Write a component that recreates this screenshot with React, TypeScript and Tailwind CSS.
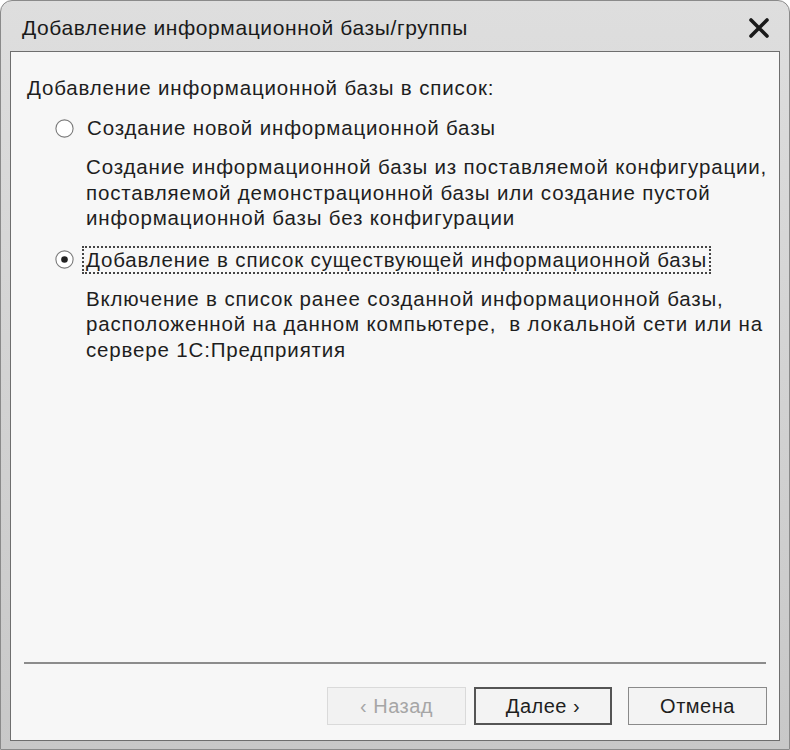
import React from "react";

const font = { fontFamily: '"Liberation Sans", Arial, sans-serif' };

function Radio({ checked }: { checked?: boolean }) {
  return (
    <svg width="19" height="19" viewBox="0 0 19 19" className="shrink-0">
      <circle cx="9.5" cy="9.5" r="8.6" fill="#fff" stroke="#7a7a7a" strokeWidth="1.1" />
      {checked && <circle cx="9.5" cy="9.5" r="3.3" fill="#222" />}
    </svg>
  );
}

export default function App() {
  return (
    <div className="w-[790px] h-[750px] bg-white text-[#1e1e1e]" style={font}>
      <div className="w-[790px] h-[750px] rounded-t-[12px] border border-[#8a8a8a] bg-gradient-to-b from-[#dedede] to-[#c8c8c8] flex flex-col px-[9px] pb-[8px]">
        <div className="h-[50px] flex items-center justify-between pl-[12px] pr-[10px] shrink-0">
          <span className="text-[21px] tracking-[0.6px] text-[#1a1a1a] pt-[4px]">Добавление информационной базы/группы</span>
          <svg width="22" height="20" viewBox="0 0 22 20" className="mt-[4px]">
            <path d="M3 2 L19 18 M19 2 L3 18" stroke="#1a1a1a" strokeWidth="3.6" strokeLinecap="round" />
          </svg>
        </div>
        <div className="flex-1 bg-[#f7f7f7] border border-[#6e6e6e] flex flex-col">
          <div className="flex-1 pl-[16px] pr-[6px] pt-[23px] text-[20.5px] tracking-[0.84px]">
            <div className="leading-[26px]">Добавление информационной базы в список:</div>
            <div className="flex items-center gap-[13px] mt-[14px] pl-[28px]">
              <Radio />
              <span className="leading-[26px]">Создание новой информационной базы</span>
            </div>
            <div className="pl-[59px] mt-[13px] leading-[25.5px] whitespace-nowrap">
              Создание информационной базы из поставляемой конфигурации,<br />
              поставляемой демонстрационной базы или создание пустой<br />
              информационной базы без конфигурации
            </div>
            <div className="flex items-center gap-[8px] mt-[15px] pl-[28px]">
              <Radio checked />
              <span className="leading-[24px] px-[2px] border-[2px] border-dotted border-[#444]">Добавление в список существующей информационной базы</span>
            </div>
            <div className="pl-[59px] mt-[12px] leading-[25.5px] whitespace-nowrap">
              Включение в список ранее созданной информационной базы,<br />
              расположенной на данном компьютере,&nbsp; в локальной сети или на<br />
              сервере 1С:Предприятия
            </div>
          </div>
          <div className="mx-[13px] border-t-[2px] border-[#8c8c8c]" />
          <div className="flex justify-end gap-[8px] pr-[12px] pt-[23px] pb-[15px] text-[20px] tracking-[0.5px]">
            <div className="w-[139px] h-[38px] flex items-center justify-center border border-[#dadada] bg-[#f2f2f2] text-[#a6a6a6]">‹ Назад</div>
            <div className="w-[138px] h-[38px] flex items-center justify-center border-[2px] border-[#555] bg-[#f3f3f3]">Далее ›</div>
            <div className="w-[139px] h-[38px] flex items-center justify-center border border-[#8a8a8a] bg-[#f3f3f3] ml-[8px]">Отмена</div>
          </div>
        </div>
      </div>
    </div>
  );
}
